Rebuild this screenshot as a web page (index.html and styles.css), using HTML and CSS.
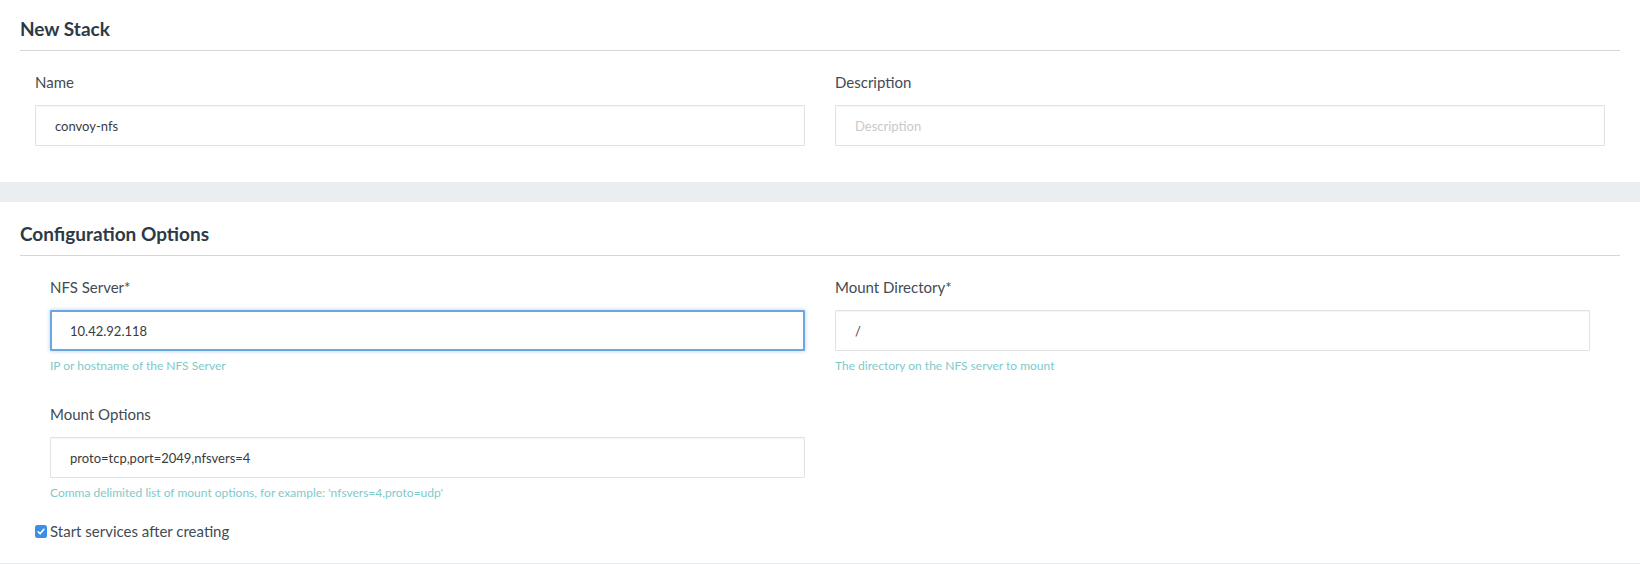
FILE: index.html
```html
<!DOCTYPE html>
<html lang="en">
<head>
<meta charset="utf-8">
<title>New Stack</title>
<link rel="stylesheet" href="styles.css">
</head>
<body>
  <section class="panel panel-first">
    <h2 class="panel-title">New Stack</h2>
    <div class="row">
      <div class="col">
        <label class="field-label">Name</label>
        <input class="field-input" type="text" value="convoy-nfs">
      </div>
      <div class="col">
        <label class="field-label">Description</label>
        <input class="field-input" type="text" placeholder="Description">
      </div>
    </div>
  </section>
  <div class="band"></div>
  <section class="panel panel-second">
    <h2 class="panel-title">Configuration Options</h2>
    <div class="row inner">
      <div class="col group">
        <label class="field-label">NFS Server*</label>
        <input class="field-input is-focused" type="text" value="10.42.92.118">
        <p class="help">IP or hostname of the NFS Server</p>
      </div>
      <div class="col group">
        <label class="field-label">Mount Directory*</label>
        <input class="field-input" type="text" value="/">
        <p class="help">The directory on the NFS server to mount</p>
      </div>
      <div class="col group">
        <label class="field-label">Mount Options</label>
        <input class="field-input" type="text" value="proto=tcp,port=2049,nfsvers=4">
        <p class="help">Comma delimited list of mount options, for example: 'nfsvers=4,proto=udp'</p>
      </div>
    </div>
    <label class="check">
      <span class="check-box"><svg width="12" height="13" viewBox="0 0 12 13"><rect x="0" y="0" width="12" height="13" rx="2.5" fill="#3b8ee3"/><path d="M3.2 6.8 L5.1 8.8 L8.9 4.3" fill="none" stroke="#fff" stroke-width="1.6" stroke-linecap="round" stroke-linejoin="round"/></svg></span>
      <span class="check-text">Start services after creating</span>
    </label>
  </section>
</body>
</html>
```

FILE: styles.css
```css
html, body {
  margin: 0;
  padding: 0;
  background: #ffffff;
}

body {
  font-family: Lato, "Open Sans", "Liberation Sans", sans-serif;
  color: #3f4852;
  width: 1640px;
  height: 564px;
  overflow: hidden;
}

.panel {
  background: #ffffff;
  padding-left: 20px;
  padding-right: 20px;
}

.panel-first {
  padding-top: 18px;
  padding-bottom: 36px;
}

.panel-second {
  padding-top: 21px;
  padding-bottom: 22px;
  border-bottom: 1px solid #e6e8ea;
}

.panel-title {
  margin: 0;
  font-size: 19px;
  font-weight: 700;
  line-height: 22px;
  color: #2d3a46;
  padding-bottom: 10px;
  border-bottom: 1px solid #d6d6d6;
}

.band {
  height: 20px;
  background: #ebeef0;
}

.row {
  display: grid;
  grid-template-columns: 1fr 1fr;
  padding-top: 21px;
}

.row.inner {
  margin: 0 15px;
}

.col {
  padding: 0 15px;
  min-width: 0;
}

.group {
  margin-bottom: 30px;
}

.group:nth-child(3) {
  margin-bottom: 20px;
}

.field-label {
  display: block;
  font-size: 15px;
  line-height: 20px;
  color: #424b55;
  margin-bottom: 13px;
}

.field-input {
  display: block;
  box-sizing: border-box;
  width: 100%;
  height: 41px;
  margin: 0;
  padding: 0 19px;
  border: 1px solid #e2e2e2;
  border-radius: 1px;
  box-shadow: inset 0 1px 1px rgba(0, 0, 0, 0.04);
  background: #ffffff;
  font-family: Lato, "Open Sans", "Liberation Sans", sans-serif;
  font-size: 13px;
  color: #3b3b3b;
  outline: none;
}

.field-input::placeholder {
  color: #c9c9c9;
}

.field-input.is-focused {
  border: 2px solid #6ba6dc;
  padding: 0 18px;
  box-shadow: 0 0 4px rgba(102, 170, 230, 0.55);
}

.help {
  margin: 6px 0 0;
  font-size: 12px;
  line-height: 17px;
  color: #7ecaca;
}

.check {
  display: flex;
  align-items: center;
  margin-left: 15px;
  height: 20px;
}

.check-box {
  display: flex;
  width: 12px;
  height: 13px;
  margin-right: 3px;
  margin-top: 1px;
}

.check-text {
  font-size: 15px;
  line-height: 20px;
  color: #424b55;
}
```
